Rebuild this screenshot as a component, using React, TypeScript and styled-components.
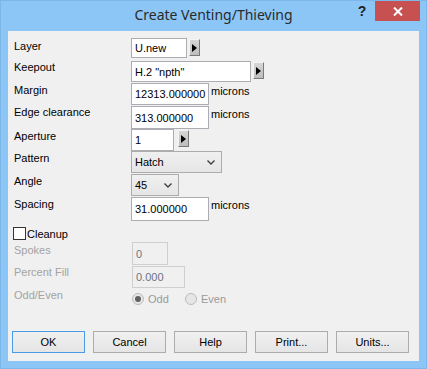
import React from 'react';
import styled, { createGlobalStyle } from 'styled-components';

const frame = '#8cc6f6';
const face = '#f0f0f0';
const uiFont = `'Liberation Sans', Arial, sans-serif`;

const GlobalStyle = createGlobalStyle`
  html, body {
    margin: 0;
    padding: 0;
    background: ${frame};
  }
`;

const Window = styled.div`
  box-sizing: border-box;
  width: 427px;
  height: 369px;
  display: flex;
  flex-direction: column;
  background: ${frame};
  border: 1px solid #7cb7e8;
  font-family: ${uiFont};
  font-size: 11px;
  color: #000;
`;

const TitleBar = styled.div`
  height: 30px;
  display: grid;
  grid-template-columns: 1fr auto 1fr;
  align-items: start;
`;

const Title = styled.div`
  font-family: 'Noto Sans', sans-serif;
  font-size: 14px;
  line-height: 27px;
  color: #2a2a2a;
  white-space: nowrap;
`;

const Caption = styled.div`
  justify-self: end;
  display: flex;
  margin-right: 6px;
`;

const HelpButton = styled.div`
  width: 26px;
  height: 20px;
  display: flex;
  align-items: center;
  justify-content: center;
  font-family: 'Liberation Sans', sans-serif;
  font-weight: bold;
  font-size: 14px;
  color: #222;
`;

const CloseButton = styled.div`
  width: 45px;
  height: 20px;
  display: flex;
  align-items: center;
  justify-content: center;
  background: #c75050;
`;

const Client = styled.div`
  flex: 1;
  margin: 0 7px 7px 7px;
  background: ${face};
  display: flex;
  flex-direction: column;
  padding: 7px 0 0 0;
`;

const Form = styled.div`
  display: flex;
  flex-direction: column;
  padding-left: 6px;
`;

const Row = styled.div<{ $h: number }>`
  display: grid;
  grid-template-columns: 117px 1fr;
  height: ${(p) => p.$h}px;
`;

const Label = styled.div<{ $dim?: boolean; $dy?: number }>`
  line-height: 13px;
  padding-top: ${(p) => p.$dy ?? 1}px;
  color: ${(p) => (p.$dim ? '#a3a3a3' : '#000')};
  white-space: nowrap;
`;

const Controls = styled.div`
  display: flex;
  align-items: flex-start;
`;

const TextBox = styled.div<{ $w: number; $h?: number; $dim?: boolean }>`
  box-sizing: border-box;
  width: ${(p) => p.$w}px;
  height: ${(p) => p.$h ?? 22}px;
  border: 1px solid ${(p) => (p.$dim ? '#cfcfcf' : '#abadb3')};
  background: ${(p) => (p.$dim ? face : '#fff')};
  color: ${(p) => (p.$dim ? '#6d7380' : '#000')};
  padding-left: 3px;
  display: flex;
  align-items: center;
  white-space: nowrap;
  overflow: hidden;
`;

const ArrowButton = styled.div<{ $gap: number }>`
  box-sizing: border-box;
  width: 11px;
  height: 17px;
  margin: 1px 0 0 ${(p) => p.$gap}px;
  background: linear-gradient(#d6d6d6, #bdbdbd);
  border: 1px solid;
  border-color: #f4f4f4 #7a7a7a #7a7a7a #f4f4f4;
  display: flex;
  align-items: center;
  justify-content: center;

  &::after {
    content: '';
    border-style: solid;
    border-width: 4px 0 4px 5px;
    border-color: transparent transparent transparent #000;
  }
`;

const Unit = styled.div`
  line-height: 13px;
  margin: 2px 0 0 2px;
`;

const Combo = styled.div<{ $w: number }>`
  box-sizing: border-box;
  width: ${(p) => p.$w}px;
  height: 22px;
  border: 1px solid #acacac;
  background: linear-gradient(#f0f0f0, #e5e5e5);
  display: flex;
  align-items: center;
  justify-content: space-between;
  padding: 0 6px 0 3px;
`;

const CheckRow = styled.div`
  display: flex;
  align-items: center;
  height: 17px;
  margin-left: -1px;
  gap: 1px;
`;

const CheckBox = styled.div`
  box-sizing: border-box;
  width: 13px;
  height: 13px;
  border: 1px solid #333;
  background: #fff;
`;

const RadioGroup = styled.div`
  display: flex;
  align-items: center;
  height: 12px;
  margin: 4px 0 0 1px;
`;

const Radio = styled.div<{ $w: number }>`
  display: flex;
  align-items: center;
  gap: 4px;
  width: ${(p) => p.$w}px;
  color: #9a9a9a;
`;

const RadioDot = styled.div<{ $on?: boolean }>`
  box-sizing: border-box;
  width: 12px;
  height: 12px;
  border-radius: 50%;
  border: 1px solid #bcbcbc;
  background: #e6e6e6;
  display: flex;
  align-items: center;
  justify-content: center;

  &::after {
    content: '';
    display: ${(p) => (p.$on ? 'block' : 'none')};
    width: 6px;
    height: 6px;
    border-radius: 50%;
    background: #606060;
  }
`;

const ButtonBar = styled.div`
  margin-top: auto;
  display: flex;
  gap: 8px;
  padding: 0 0 8px 4px;
`;

const Button = styled.div<{ $default?: boolean }>`
  box-sizing: border-box;
  width: 73px;
  height: 22px;
  border: 1px solid ${(p) => (p.$default ? '#4a9ce6' : '#acacac')};
  background: linear-gradient(#f0f0f0, #e5e5e5);
  display: flex;
  align-items: center;
  justify-content: center;
`;

const Chevron = () => (
  <svg width="8" height="5" viewBox="0 0 8 5">
    <path d="M0.5 0.5 L4 4 L7.5 0.5" fill="none" stroke="#404040" strokeWidth="1.4" />
  </svg>
);

const App = () => (
  <>
    <GlobalStyle />
    <Window>
      <TitleBar>
        <span />
        <Title>Create Venting/Thieving</Title>
        <Caption>
          <HelpButton>?</HelpButton>
          <CloseButton>
            <svg width="10" height="9" viewBox="0 0 10 9">
              <path d="M1 0.5 L9 8.5 M9 0.5 L1 8.5" stroke="#fff" strokeWidth="2" />
            </svg>
          </CloseButton>
        </Caption>
      </TitleBar>
      <Client>
        <Form>
          <Row $h={23}>
            <Label $dy={2}>Layer</Label>
            <Controls>
              <TextBox $w={56} $h={20}>U.new</TextBox>
              <ArrowButton $gap={2} />
            </Controls>
          </Row>
          <Row $h={22}>
            <Label $dy={0}>Keepout</Label>
            <Controls>
              <TextBox $w={120} $h={21}>H.2 "npth"</TextBox>
              <ArrowButton $gap={2} />
            </Controls>
          </Row>
          <Row $h={23}>
            <Label>Margin</Label>
            <Controls>
              <TextBox $w={78}>12313.000000</TextBox>
              <Unit>microns</Unit>
            </Controls>
          </Row>
          <Row $h={23}>
            <Label $dy={0}>Edge clearance</Label>
            <Controls>
              <TextBox $w={78} $h={23}>313.000000</TextBox>
              <Unit>microns</Unit>
            </Controls>
          </Row>
          <Row $h={22}>
            <Label>Aperture</Label>
            <Controls>
              <TextBox $w={43}>1</TextBox>
              <ArrowButton $gap={4} />
            </Controls>
          </Row>
          <Row $h={23}>
            <Label>Pattern</Label>
            <Controls>
              <Combo $w={91}>
                Hatch
                <Chevron />
              </Combo>
            </Controls>
          </Row>
          <Row $h={23}>
            <Label>Angle</Label>
            <Controls>
              <Combo $w={48}>
                45
                <Chevron />
              </Combo>
            </Controls>
          </Row>
          <Row $h={28}>
            <Label>Spacing</Label>
            <Controls>
              <TextBox $w={78} $h={24}>31.000000</TextBox>
              <Unit>microns</Unit>
            </Controls>
          </Row>
          <CheckRow>
            <CheckBox />
            Cleanup
          </CheckRow>
          <Row $h={24}>
            <Label $dim $dy={2}>Spokes</Label>
            <Controls>
              <TextBox $w={36} $h={23} $dim style={{ marginLeft: 1 }}>0</TextBox>
            </Controls>
          </Row>
          <Row $h={23}>
            <Label $dim $dy={0}>Percent Fill</Label>
            <Controls>
              <TextBox $w={53} $dim style={{ marginLeft: 1 }}>0.000</TextBox>
            </Controls>
          </Row>
          <Row $h={20}>
            <Label $dim $dy={0}>Odd/Even</Label>
            <RadioGroup>
              <Radio $w={53}>
                <RadioDot $on />
                Odd
              </Radio>
              <Radio $w={60}>
                <RadioDot />
                Even
              </Radio>
            </RadioGroup>
          </Row>
        </Form>
        <ButtonBar>
          <Button $default>OK</Button>
          <Button>Cancel</Button>
          <Button>Help</Button>
          <Button>Print...</Button>
          <Button>Units...</Button>
        </ButtonBar>
      </Client>
    </Window>
  </>
);

export default App;
